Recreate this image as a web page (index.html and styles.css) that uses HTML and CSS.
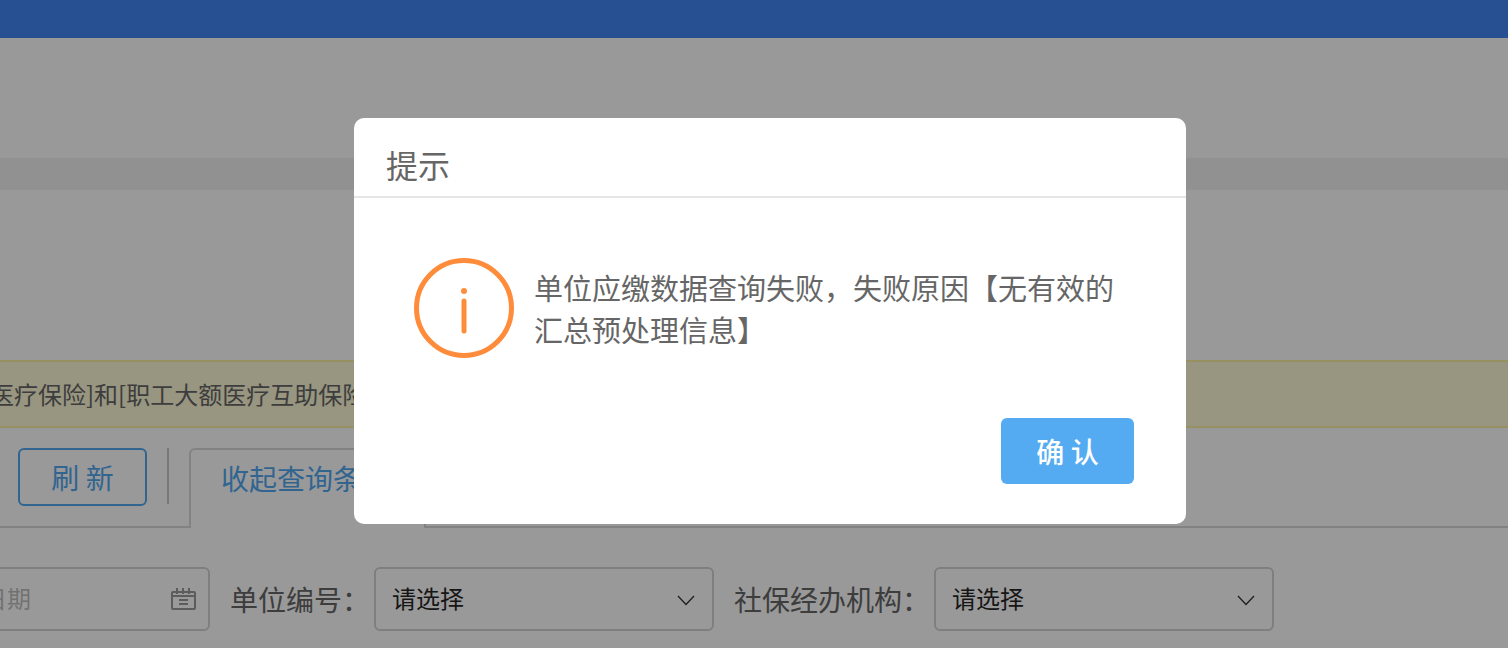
FILE: index.html
```html
<!DOCTYPE html>
<html lang="zh-CN">
<head>
<meta charset="utf-8">
<meta name="viewport" content="width=device-width, initial-scale=1">
<title>提示</title>
<link rel="stylesheet" href="styles.css">
</head>
<body>
<div class="page">
  <header class="topbar"></header>
  <div class="heading"></div>
  <div class="band"></div>
  <main class="content">
    <p class="notice">医疗保险]和[职工大额医疗互助保险</p>
    <div class="tabs">
      <div class="toolbar">
        <button class="refresh" type="button">刷 新</button>
        <span class="divider"></span>
      </div>
      <button class="tab" type="button">收起查询条件</button>
      <div class="tabs-rest"></div>
    </div>
    <form class="filters">
      <div class="date">
        <input class="control" type="text" placeholder="请选择日期" aria-label="日期">
        <svg class="calendar" viewBox="0 0 26 24" fill="none" stroke="currentColor" stroke-width="2" aria-hidden="true">
          <rect x="2" y="5" width="23" height="17" rx="1"/>
          <path d="M2 9h23M7 1v6M13 1v6M19 1v6M9 13h9M9 17h9"/>
        </svg>
      </div>
      <div class="field">
        <label for="unit">单位编号：</label>
        <div class="select">
          <select class="control" id="unit"><option>请选择</option></select>
          <svg class="chevron" viewBox="0 0 18 12" fill="none" stroke="currentColor" stroke-width="1.3" aria-hidden="true"><path d="M1 2l8 8.500l8-8.500"/></svg>
        </div>
      </div>
      <div class="field">
        <label for="agency">社保经办机构：</label>
        <div class="select">
          <select class="control" id="agency"><option>请选择</option></select>
          <svg class="chevron" viewBox="0 0 18 12" fill="none" stroke="currentColor" stroke-width="1.3" aria-hidden="true"><path d="M1 2l8 8.500l8-8.500"/></svg>
        </div>
      </div>
    </form>
  </main>
</div>
<div class="overlay">
  <section class="dialog" role="dialog" aria-modal="true" aria-labelledby="dialog-title">
    <h2 class="dialog-title" id="dialog-title">提示</h2>
    <div class="dialog-body">
      <svg class="info" viewBox="0 0 100 100" fill="none" stroke="#ff8c3a" aria-hidden="true">
        <circle cx="50" cy="50" r="47.500" stroke-width="5"/>
        <path d="M50 43v30" stroke-width="5" stroke-linecap="round"/>
        <circle cx="50" cy="33" r="3" fill="#ff8c3a" stroke="none"/>
      </svg>
      <p class="message">单位应缴数据查询失败，失败原因【无有效的汇总预处理信息】</p>
    </div>
    <div class="dialog-footer"><button class="confirm" type="button">确 认</button></div>
  </section>
</div>
</body>
</html>
```
FILE: styles.css
```css
* {
  box-sizing: border-box;
}

body {
  margin: 0;
  overflow: hidden;
  background: #fff;
  color: #666;
  font-family: "Noto Sans CJK SC", sans-serif;
  font-size: 28px;
}

button,
input,
select {
  font: inherit;
}

.page {
  height: 100vh;
  overflow: hidden;
}

.topbar {
  height: 38px;
  background: #4186f5;
}

.heading {
  height: 120px;
}

.band {
  height: 32px;
  background: #f2f2f2;
}

.content {
  padding-top: 170px;
}

.notice {
  margin: 0 0 20px;
  padding: 12px 0;
  border: solid #fcf0a2;
  border-width: 2px 0;
  background: #fefad6;
  font-size: 24px;
  line-height: 40px;
  text-indent: -10px;
  white-space: nowrap;
}

.tabs {
  display: flex;
  height: 80px;
  margin-bottom: 39px;
}

.toolbar {
  display: flex;
  gap: 20px;
  width: 189px;
  padding-left: 18px;
  border-bottom: 2px solid #d9d9d9;
}

.refresh {
  width: 129px;
  height: 58px;
  padding: 0;
  border: 2px solid #53a9f1;
  border-radius: 6px;
  background: #fff;
  color: #53a9f1;
}

.divider {
  width: 2px;
  height: 56px;
  background: #c8c8c8;
}

.tab {
  width: 237px;
  padding: 0 36px 22px 30px;
  border: 2px solid #d9d9d9;
  border-bottom: 0;
  border-radius: 6px 6px 0 0;
  background: #fff;
  color: #53a9f1;
  white-space: nowrap;
}

.tabs-rest {
  flex: 1;
  border-bottom: 2px solid #d9d9d9;
}

.filters {
  display: flex;
  align-items: center;
  gap: 20px;
  margin-left: -110px;
}

.field {
  display: flex;
  align-items: center;
  gap: 4px;
  white-space: nowrap;
}

.date,
.select {
  position: relative;
}

.date {
  width: 320px;
}

.select {
  width: 340px;
}

.control {
  display: block;
  width: 100%;
  height: 64px;
  padding: 0 16px 4px;
  border: 2px solid #d4d4d4;
  border-radius: 6px;
  appearance: none;
  background: #fff;
  color: #262626;
  font-size: 24px;
}

.date .control {
  padding-left: 19px;
}

.control::placeholder {
  color: #bfbfbf;
  opacity: 1;
}

.calendar {
  position: absolute;
  top: 20px;
  right: 14px;
  width: 26px;
  height: 24px;
  color: #999;
}

.chevron {
  position: absolute;
  top: 27px;
  right: 19px;
  width: 18px;
  height: 12px;
  color: #333;
  pointer-events: none;
}

.overlay {
  position: fixed;
  inset: 0;
  display: flex;
  align-items: flex-start;
  justify-content: center;
  padding: 118px 0 0 32px;
  background: rgba(0, 0, 0, 0.4);
}

.dialog {
  width: 832px;
  max-width: 100%;
  border-radius: 10px;
  background: #fff;
}

.dialog-title {
  margin: 0;
  padding: 22px 32px 8px;
  border-bottom: 2px solid #e6e6e6;
  font-size: 32px;
  font-weight: 400;
  line-height: 48px;
}

.dialog-body {
  display: flex;
  align-items: center;
  gap: 20px;
  padding: 60px;
}

.info {
  flex: none;
  width: 100px;
  height: 100px;
}

.message {
  margin: 0;
  font-size: 29px;
  line-height: 42px;
}

.dialog-footer {
  display: flex;
  justify-content: flex-end;
  padding: 0 52px 40px;
}

.confirm {
  width: 133px;
  height: 66px;
  padding: 0;
  border: 0;
  border-radius: 6px;
  background: #54abf2;
  color: #fff;
  font-weight: 500;
}
```
